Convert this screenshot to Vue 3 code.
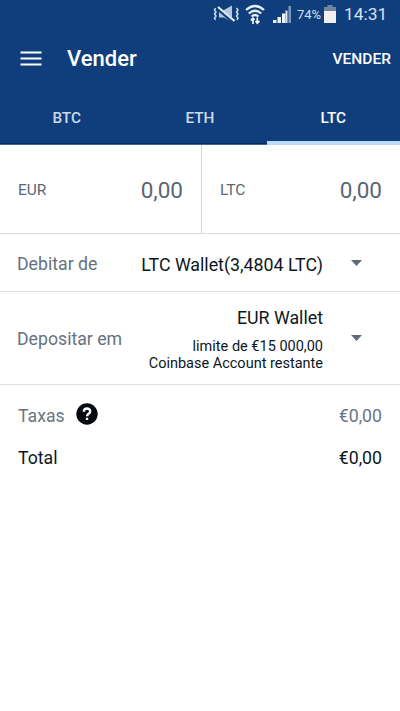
<script setup>
import { ref } from 'vue'

const tabs = ['BTC', 'ETH', 'LTC']
const active = ref('LTC')
const amounts = [
  { unit: 'EUR', value: '0,00' },
  { unit: 'LTC', value: '0,00' },
]
</script>

<template>
  <div class="screen">
    <div class="status">
      <svg class="mute" width="27" height="18" viewBox="0 0 27 18">
        <path d="M6 5h5l8-4.500v16.500l-8-4.500H6z" fill="#b3c8de" />
        <path d="M5 3.500L21.500 17.500" stroke="#103e7c" stroke-width="4" />
        <path d="M5 2L21.500 16" stroke="#e3edf5" stroke-width="2.200" />
        <path d="M2.500 3l-1 2 1.500 2-1.500 2 1.500 2-1.500 2 1 2M23.500 3l1.500 2-1.500 2 1.500 2-1.500 2 1.500 2-1 2" fill="none" stroke="#d2e0ed" stroke-width="1.500" />
      </svg>
      <svg class="wifi" width="20" height="21" viewBox="0 0 20 21">
        <path d="M1 6Q10-2 19 6M3.8 9.5Q10 4 16.2 9.5M6.5 12.5Q10 9.500 13.5 12.5" fill="none" stroke="#e3edf5" stroke-width="2.200" />
        <path d="M8 20v-6M5.800 16.500L8 14l1.500 2M12.300 13.500v6M10.600 17l1.700 2.300 2.200-2.300" fill="none" stroke="#f2f6fa" stroke-width="1.700" />
      </svg>
      <svg class="signal" width="18" height="18" viewBox="0 0 18 18">
        <path d="M0 15h3.500v3H0zM4.500 12h3.500v6H4.500zM9 8.500h3.500V18H9z" fill="#eef4f9" />
        <path d="M12.500 5.500h2V18h-2z" fill="#d7e3ee" />
        <path d="M15.500 1H18v17h-2.500z" fill="#7d98b8" />
      </svg>
      <span class="percent">74%</span>
      <svg class="battery" width="12" height="18" viewBox="0 0 12 18">
        <path d="M3.500 0h5v2H12v4H0V2h3.500z" fill="#71869f" />
        <path d="M0 6h12v12H0z" fill="#f0f1ef" />
      </svg>
      <span class="clock">14:31</span>
    </div>

    <header class="bar">
      <svg class="menu" width="22" height="16" viewBox="0 0 22 16">
        <path d="M.5 1.500h21M.5 7.500h21M.5 13.500h21" stroke="#fff" stroke-width="2.200" />
      </svg>
      <h1>Vender</h1>
      <button class="action">VENDER</button>
    </header>

    <nav class="tabs">
      <button v-for="t in tabs" :key="t" :class="{ active: t === active }" @click="active = t">{{ t }}</button>
    </nav>

    <section class="amounts">
      <div v-for="a in amounts" :key="a.unit" class="amount">
        <span class="unit">{{ a.unit }}</span>
        <span class="value">{{ a.value }}</span>
      </div>
    </section>

    <section class="row debit">
      <span class="label">Debitar de</span>
      <span class="wallet">LTC Wallet(3,4804 LTC)</span>
      <svg class="caret" width="11" height="6" viewBox="0 0 11 6"><path d="M0 0h11L5.500 6z" fill="#626c78" /></svg>
    </section>

    <section class="row deposit">
      <span class="label">Depositar em</span>
      <div class="details">
        <span class="wallet">EUR Wallet</span>
        <span class="limit">limite de €15 000,00<br />Coinbase Account restante</span>
      </div>
      <svg class="caret" width="11" height="6" viewBox="0 0 11 6"><path d="M0 0h11L5.500 6z" fill="#626c78" /></svg>
    </section>

    <section class="summary">
      <div class="line fees">
        <span class="name">Taxas</span>
        <svg class="help" width="22" height="22" viewBox="0 0 22 22">
          <circle cx="11" cy="11" r="10.700" fill="#060b12" />
          <path d="M7.800 8.800C7.800 4.500 14.200 4.500 14.200 8.400C14.200 10.700 11 10.700 11 13.200" fill="none" stroke="#fff" stroke-width="2.400" />
          <path d="M9.800 14.700h2.400V17H9.800z" fill="#fff" />
        </svg>
        <span class="sum">€0,00</span>
      </div>
      <div class="line total">
        <span>Total</span>
        <span class="sum">€0,00</span>
      </div>
    </section>
  </div>
</template>

<style>
body {
  margin: 0;
  background: #fff;
}
</style>

<style scoped>
.screen {
  width: 400px;
  height: 711px;
  overflow: hidden;
  background: #fff;
  color: #0c1722;
  font-family: Roboto, sans-serif;
}
.screen * {
  box-sizing: border-box;
}
svg {
  display: block;
  flex: none;
}
button {
  padding: 0;
  border: 0;
  background: none;
  font: inherit;
  color: inherit;
}
.status {
  display: flex;
  align-items: center;
  height: 30px;
  padding: 0 0 2px 213px;
  background: #103e7c;
  color: #d5e0eb;
  white-space: nowrap;
}
.wifi {
  margin-left: 5px;
}
.signal {
  margin-left: 8px;
}
.percent {
  width: 27px;
  margin-left: 6px;
  font-size: 13px;
}
.clock {
  margin-left: 8px;
  font-size: 17.4px;
}
.bar {
  display: flex;
  align-items: center;
  height: 60px;
  padding: 0 9px 2px 20px;
  background: #103e7c;
  color: #fff;
}
h1 {
  margin: 0 0 0 25px;
  font-size: 22px;
  line-height: 28px;
  font-weight: 500;
}
.action {
  margin-left: auto;
  font-size: 15.5px;
  font-weight: 500;
}
.tabs {
  display: grid;
  grid-template-columns: repeat(3, 1fr);
  height: 55px;
  background: #103e7c;
  box-shadow: inset 0 -1px #416590, inset 0 -2px #052b63;
  color: #cbdbe9;
  font-size: 15.3px;
  font-weight: 500;
}
.tabs button {
  padding-top: 4px;
  border-bottom: 4px solid transparent;
}
.tabs .active {
  border-bottom-color: #b9dcf3;
  color: #fff;
}
.amounts {
  display: grid;
  grid-template-columns: 202px 198px;
  height: 89px;
  border-bottom: 1px solid #dcdcdc;
  color: #5b6673;
}
.amount {
  display: flex;
  align-items: center;
  justify-content: space-between;
  padding: 1px 18px 0;
}
.amount:first-child {
  border-right: 1px solid #d3d3d3;
}
.unit {
  font-size: 15.5px;
}
.value {
  font-size: 22.5px;
}
.row {
  display: flex;
  align-items: center;
  padding: 0 38px 0 17px;
  border-bottom: 1px solid #dfdfdf;
}
.label {
  padding-top: 2px;
  color: #66717e;
  font-size: 17.7px;
}
.wallet {
  font-size: 17.8px;
}
.debit {
  height: 58px;
}
.debit .wallet {
  margin: 3px 0 0 auto;
}
.caret {
  margin-left: 28px;
}
.deposit {
  height: 93px;
}
.details {
  display: flex;
  flex-direction: column;
  align-items: flex-end;
  gap: 9px;
  margin-left: auto;
  padding-top: 2px;
  line-height: 22px;
}
.limit {
  font-size: 14.5px;
  line-height: 17px;
  text-align: right;
}
.summary {
  padding: 10px 18px 0;
  font-size: 17.7px;
}
.line {
  display: flex;
  align-items: center;
  height: 42px;
}
.fees {
  color: #6b7581;
}
.name {
  width: 46px;
}
.help {
  margin: -4px 0 0 12px;
}
.sum {
  margin-left: auto;
}
</style>
